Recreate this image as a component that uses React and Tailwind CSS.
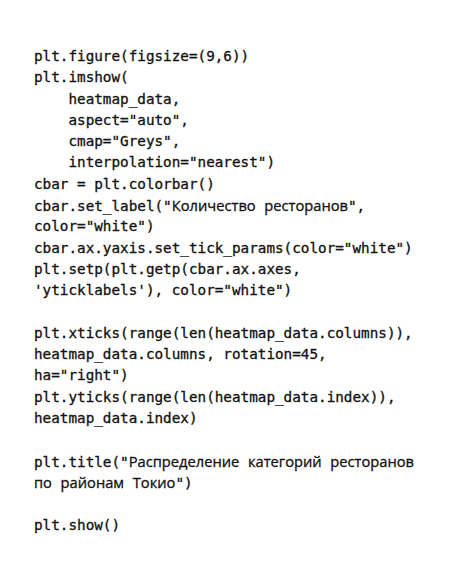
import React from "react";

const code = [
  'plt.figure(figsize=(9,6))',
  'plt.imshow(',
  '    heatmap_data,',
  '    aspect="auto",',
  '    cmap="Greys",',
  '    interpolation="nearest")',
  'cbar = plt.colorbar()',
  'cbar.set_label("Количество ресторанов",',
  'color="white")',
  'cbar.ax.yaxis.set_tick_params(color="white")',
  'plt.setp(plt.getp(cbar.ax.axes,',
  "'yticklabels'), color=\"white\")",
  '',
  'plt.xticks(range(len(heatmap_data.columns)),',
  'heatmap_data.columns, rotation=45,',
  'ha="right")',
  'plt.yticks(range(len(heatmap_data.index)),',
  'heatmap_data.index)',
  '',
  'plt.title("Распределение категорий ресторанов',
  'по районам Токио")',
  '',
  'plt.show()',
];

/* cyrillic words fall back to a proportional sans, like in the source */
function Line({ text }) {
  const parts = text.split(/([А-Яа-яЁё]+)/);
  return (
    <div className="h-[21.3px] whitespace-pre">
      {parts.map((p, i) =>
        /[А-Яа-яЁё]/.test(p) ? (
          <span key={i} className="font-['Open_Sans',sans-serif] text-[14.7px]">
            {p}
          </span>
        ) : (
          <span key={i}>{p}</span>
        )
      )}
    </div>
  );
}

export default function App() {
  return (
    <div className="w-[450px] h-[580px] bg-white overflow-hidden">
      <div className="pt-[46px] pl-[34px] font-['DejaVu_Sans_Mono',monospace] text-[14.3px] leading-[21.3px] text-[#111] [-webkit-text-stroke:0.3px_#111]">
        {code.map((l, i) => (
          <Line key={i} text={l} />
        ))}
      </div>
    </div>
  );
}
